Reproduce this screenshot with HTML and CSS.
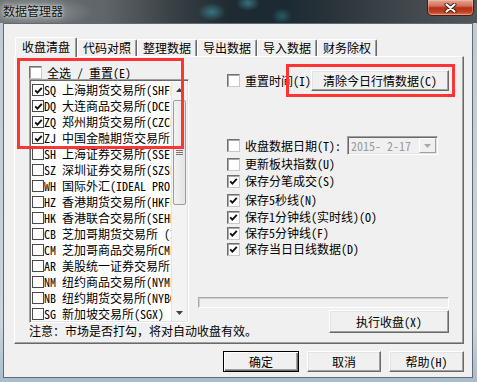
FILE: index.html
```html
<!DOCTYPE html>
<html>
<head>
<meta charset="utf-8">
<link rel="stylesheet" href="styles.css">
</head>
<body>
<div class="window">
  <div class="titlebar">
    <span class="title">数据管理器</span>
    <div class="close">
      <svg width="13" height="10" viewBox="0 0 13 10"><path d="M2.5 1.5 L10.5 8.5 M10.5 1.5 L2.5 8.5" stroke="#3b1c16" stroke-width="4" stroke-linecap="round"/><path d="M2.5 1.5 L10.5 8.5 M10.5 1.5 L2.5 8.5" stroke="#fff" stroke-width="2.2" stroke-linecap="round"/></svg>
    </div>
  </div>
  <div class="client">
    <div class="tabs">
      <div class="tab active">收盘清盘</div>
      <div class="tab">代码对照</div>
      <div class="tab">整理数据</div>
      <div class="tab">导出数据</div>
      <div class="tab">导入数据</div>
      <div class="tab">财务除权</div>
    </div>
    <div class="pane">
      <div class="leftcol">
        <div class="chk selall"><span class="box"></span><span>全选 / 重置(E)</span></div>
        <div class="listbox">
          <div class="items">
            <div class="item"><span class="lbox on"><svg width="9" height="9" viewBox="0 0 9 9"><polyline points="1.2,4.3 3.4,6.6 7.8,1.8" fill="none" stroke="#111" stroke-width="1.9"/></svg></span>SQ 上海期货交易所(SHFE)</div>
            <div class="item"><span class="lbox on"><svg width="9" height="9" viewBox="0 0 9 9"><polyline points="1.2,4.3 3.4,6.6 7.8,1.8" fill="none" stroke="#111" stroke-width="1.9"/></svg></span>DQ 大连商品交易所(DCE)</div>
            <div class="item"><span class="lbox on"><svg width="9" height="9" viewBox="0 0 9 9"><polyline points="1.2,4.3 3.4,6.6 7.8,1.8" fill="none" stroke="#111" stroke-width="1.9"/></svg></span>ZQ 郑州期货交易所(CZCE)</div>
            <div class="item"><span class="lbox on"><svg width="9" height="9" viewBox="0 0 9 9"><polyline points="1.2,4.3 3.4,6.6 7.8,1.8" fill="none" stroke="#111" stroke-width="1.9"/></svg></span>ZJ 中国金融期货交易所</div>
            <div class="item"><span class="lbox"></span>SH 上海证券交易所(SSE)</div>
            <div class="item"><span class="lbox"></span>SZ 深圳证券交易所(SZSE)</div>
            <div class="item"><span class="lbox"></span>WH 国际外汇(IDEAL PRO)</div>
            <div class="item"><span class="lbox"></span>HZ 香港期货交易所(HKFE)</div>
            <div class="item"><span class="lbox"></span>HK 香港联合交易所(SEHK)</div>
            <div class="item"><span class="lbox"></span>CB 芝加哥期货交易所 (IMM)</div>
            <div class="item"><span class="lbox"></span>CM 芝加哥商品交易所CME</div>
            <div class="item"><span class="lbox"></span>AR 美股统一证券交易所</div>
            <div class="item"><span class="lbox"></span>NM 纽约商品交易所(NYMEX)</div>
            <div class="item"><span class="lbox"></span>NB 纽约期货交易所(NYBOT)</div>
            <div class="item"><span class="lbox"></span>SG 新加坡交易所(SGX)</div>
          </div>
          <div class="sb">
            <div class="sb-btn"><svg width="7" height="4" viewBox="0 0 7 4"><path d="M0 4 L3.5 0 L7 4 Z" fill="#404040"/></svg></div>
            <div class="sb-track"><div class="sb-thumb"><span class="grip"></span></div></div>
            <div class="sb-btn"><svg width="7" height="4" viewBox="0 0 7 4"><path d="M0 0 L3.5 4 L7 0 Z" fill="#404040"/></svg></div>
          </div>
        </div>
        <div class="note">注意：市场是否打勾，将对自动收盘有效。</div>
      </div>
      <div class="rightcol">
        <div class="row1">
          <div class="chk"><span class="box"></span><span>重置时间(I)</span></div>
          <div class="btn clear">清除今日行情数据(C)</div>
        </div>
        <div class="daterow">
          <div class="chk"><span class="box"></span><span>收盘数据日期(T):</span></div>
          <div class="combo"><span class="combo-text">2015- 2-17</span><span class="combo-btn"><svg width="7" height="4" viewBox="0 0 7 4"><path d="M0 0 L3.5 4 L7 0 Z" fill="#a8a8a8"/></svg></span></div>
        </div>
        <div class="opts">
          <div class="chk"><span class="box"></span><span>更新板块指数(U)</span></div>
          <div class="chk"><span class="box"><svg width="9" height="9" viewBox="0 0 9 9"><polyline points="1.2,4.3 3.4,6.6 7.8,1.8" fill="none" stroke="#111" stroke-width="1.9"/></svg></span><span>保存分笔成交(S)</span></div>
          <div class="chk"><span class="box"><svg width="9" height="9" viewBox="0 0 9 9"><polyline points="1.2,4.3 3.4,6.6 7.8,1.8" fill="none" stroke="#111" stroke-width="1.9"/></svg></span><span>保存5秒线(N)</span></div>
          <div class="chk"><span class="box"><svg width="9" height="9" viewBox="0 0 9 9"><polyline points="1.2,4.3 3.4,6.6 7.8,1.8" fill="none" stroke="#111" stroke-width="1.9"/></svg></span><span>保存1分钟线(实时线)(O)</span></div>
          <div class="chk"><span class="box"><svg width="9" height="9" viewBox="0 0 9 9"><polyline points="1.2,4.3 3.4,6.6 7.8,1.8" fill="none" stroke="#111" stroke-width="1.9"/></svg></span><span>保存5分钟线(F)</span></div>
          <div class="chk"><span class="box"><svg width="9" height="9" viewBox="0 0 9 9"><polyline points="1.2,4.3 3.4,6.6 7.8,1.8" fill="none" stroke="#111" stroke-width="1.9"/></svg></span><span>保存当日日线数据(D)</span></div>
        </div>
        <div class="progress"></div>
        <div class="btn run">执行收盘(X)</div>
      </div>
    </div>
    <div class="buttons">
      <div class="btn default ok">确定</div>
      <div class="btn cancel">取消</div>
      <div class="btn help">帮助(H)</div>
    </div>
  </div>
  <div class="mark mark1"></div>
  <div class="mark mark2"></div>
</div>
</body>
</html>
```
FILE: styles.css
```css
* { box-sizing: border-box; }
html, body { margin: 0; padding: 0; }
body {
  width: 477px;
  height: 382px;
  overflow: hidden;
  font: 12px/14px "Noto Sans Mono CJK SC", "Noto Sans CJK SC", sans-serif;
  color: #000;
  background: #c3cfd9;
}
.window {
  position: relative;
  width: 477px;
  height: 382px;
  display: flex;
  flex-direction: column;
  background: linear-gradient(#bfcad3, #c9d4dd 85%, #a9bccc);
}
.titlebar {
  height: 23px;
  flex: none;
  display: flex;
  justify-content: space-between;
  align-items: flex-start;
  background:
    radial-gradient(ellipse 14px 9px at 212px 12px, rgba(70,170,190,.55), transparent),
    radial-gradient(ellipse 12px 8px at 248px 3px, rgba(80,180,200,.5), transparent),
    radial-gradient(ellipse 10px 8px at 282px 16px, rgba(60,150,170,.45), transparent),
    radial-gradient(ellipse 60px 16px at 34px 12px, rgba(190,195,198,.55), transparent),
    linear-gradient(90deg, #6b7073 0%, #5f6568 22%, #3a4146 36%, #1f2a31 48%, #1b2a32 60%, #2a343a 70%, #3d4449 82%, #51575b 100%);
}
.title {
  margin: 3px 0 0 3px;
  line-height: 16px;
  color: #111;
  text-shadow: 0 0 3px rgba(255,255,255,.9), 0 0 7px rgba(255,255,255,.6);
}
.close {
  width: 47px;
  height: 16px;
  margin-right: 3px;
  border: 1px solid #4b1a12;
  border-top: 0;
  border-radius: 0 0 5px 5px;
  background: linear-gradient(#e8a592, #d0705a 40%, #b6301a 52%, #c2401f 80%, #de7b62);
  box-shadow: inset 0 0 0 1px rgba(255,220,210,.35);
  display: flex;
  align-items: center;
  justify-content: center;
}
.client {
  flex: 1;
  margin: 0 4px 4px 3px;
  background: #f0f0f0;
  border: 1px solid #5e6a74;
  padding: 13px 8px 0 10px;
  display: flex;
  flex-direction: column;
}
.tabs {
  height: 19px;
  display: flex;
  align-items: flex-end;
  padding-left: 1px;
  position: relative;
  z-index: 1;
}
.tab {
  width: 60px;
  height: 17px;
  text-align: center;
  line-height: 15px;
  border-top: 1px solid #fff;
  border-left: 1px solid #fff;
  border-right: 1px solid #696969;
  box-shadow: inset -1px 0 #a0a0a0;
  border-radius: 2px 2px 0 0;
  white-space: nowrap;
}
.tab.active {
  width: 62px;
  height: 20px;
  margin-bottom: -1px;
  line-height: 16px;
  padding-top: 1px;
  background: #f0f0f0;
}
.pane {
  width: 450px;
  height: 288px;
  flex: none;
  border: 1px solid;
  border-color: #fff #696969 #696969 #fff;
  box-shadow: inset -1px -1px #a0a0a0;
  display: flex;
  padding: 0 15px 10px 14px;
}
.leftcol {
  width: 160px;
  flex: none;
  display: flex;
  flex-direction: column;
}
.chk {
  display: flex;
  align-items: center;
  gap: 5px;
  height: 16px;
  white-space: nowrap;
}
.selall {
  margin-top: 9px;
  height: 13px;
}
.box {
  width: 13px;
  height: 13px;
  flex: none;
  background: #fff;
  border: 1px solid;
  border-color: #707070 #c8c8c8 #c8c8c8 #707070;
  box-shadow: inset 1px 1px #a8a8a8;
  display: flex;
  align-items: center;
  justify-content: center;
}
.listbox {
  height: 244px;
  border: 1px solid;
  border-color: #a0a0a0 #fff #fff #a0a0a0;
  box-shadow: inset 1px 1px #696969, inset -1px -1px #e3e3e3;
  padding: 2px 1px 1px 2px;
  background: #fff;
  display: flex;
}
.items {
  flex: 1;
  overflow: hidden;
  background: #fff;
}
.item {
  height: 16px;
  display: flex;
  align-items: center;
  white-space: nowrap;
  line-height: 16px;
}
.lbox {
  width: 12px;
  height: 12px;
  flex: none;
  border: 1px solid #4a4a4a;
  background: #fff;
  display: flex;
  align-items: center;
  justify-content: center;
}
.sb {
  width: 16px;
  flex: none;
  display: flex;
  flex-direction: column;
  background: #f3f3f3;
  border-left: 1px solid #e6e6e6;
}
.sb-btn {
  height: 16px;
  display: flex;
  align-items: center;
  justify-content: center;
}
.sb-track {
  flex: 1;
  padding-top: 2px;
}
.sb-thumb {
  height: 105px;
  margin: 0 1px;
  border: 1px solid #9c9c9c;
  border-radius: 2px;
  background: linear-gradient(90deg, #f2f2f2, #e4e4e4);
  display: flex;
  align-items: center;
  justify-content: center;
}
.grip {
  width: 7px;
  height: 5px;
  border-top: 1px solid #777;
  border-bottom: 1px solid #777;
  background: linear-gradient(#777, #777) center / 7px 1px no-repeat;
}
.note {
  margin-top: 1px;
  line-height: 14px;
  white-space: nowrap;
}
.rightcol {
  flex: 1;
  margin-left: 9px;
  display: flex;
  flex-direction: column;
}
.row1 {
  margin-top: 13px;
  height: 21px;
  display: flex;
  align-items: center;
  padding-left: 29px;
}
.btn {
  display: flex;
  align-items: center;
  justify-content: center;
  background: #f0f0f0;
  border: 1px solid;
  border-color: #fff #696969 #696969 #fff;
  box-shadow: inset -1px -1px #a0a0a0, inset 1px 1px #e3e3e3;
  white-space: nowrap;
}
.clear {
  margin-left: auto;
  width: 138px;
  height: 21px;
}
.daterow {
  margin-top: 45px;
  height: 19px;
  display: flex;
  align-items: center;
  padding-left: 29px;
}
.combo {
  margin-left: 6px;
  width: 91px;
  height: 19px;
  border: 1px solid;
  border-color: #a0a0a0 #fff #fff #a0a0a0;
  box-shadow: inset 1px 1px #696969, inset -1px -1px #e3e3e3;
  background: #f0f0f0;
  display: flex;
  align-items: center;
  padding: 1px 1px 1px 3px;
}
.combo-text {
  flex: 1;
  color: #9a9a9a;
  white-space: nowrap;
}
.combo-btn {
  width: 17px;
  height: 15px;
  border: 1px solid;
  border-color: #fff #a0a0a0 #a0a0a0 #fff;
  background: #f0f0f0;
  display: flex;
  align-items: center;
  justify-content: center;
}
.opts {
  margin-top: 2px;
  padding-left: 29px;
  display: grid;
  grid-template-rows: 17px 19px 17px 16px 16px 14px;
  align-items: start;
}
.opts .chk {
  height: 14px;
  line-height: 14px;
}
.progress {
  margin-top: auto;
  height: 11px;
  border: 1px solid;
  border-color: #a8a8a8 #fff #fff #a8a8a8;
  box-shadow: inset 1px 1px #d0d0d0;
  background: #f0f0f0;
}
.run {
  margin-top: 2px;
  margin-left: auto;
  width: 120px;
  height: 23px;
}
.buttons {
  margin-top: 7px;
  display: flex;
  justify-content: flex-end;
  gap: 8px;
}
.buttons .btn {
  height: 21px;
}
.ok { width: 76px; }
.cancel { width: 74px; }
.help { width: 75px; }
.btn.default {
  border: 1px solid #000;
  box-shadow: inset 1px 1px #fff, inset -1px -1px #696969, inset -2px -2px #a0a0a0;
}
.mark {
  position: absolute;
  border: 3px solid #ff3434;
  pointer-events: none;
}
.mark1 {
  left: 17px;
  top: 58px;
  width: 167px;
  height: 91px;
}
.mark2 {
  left: 286px;
  top: 64px;
  width: 169px;
  height: 33px;
}
```
